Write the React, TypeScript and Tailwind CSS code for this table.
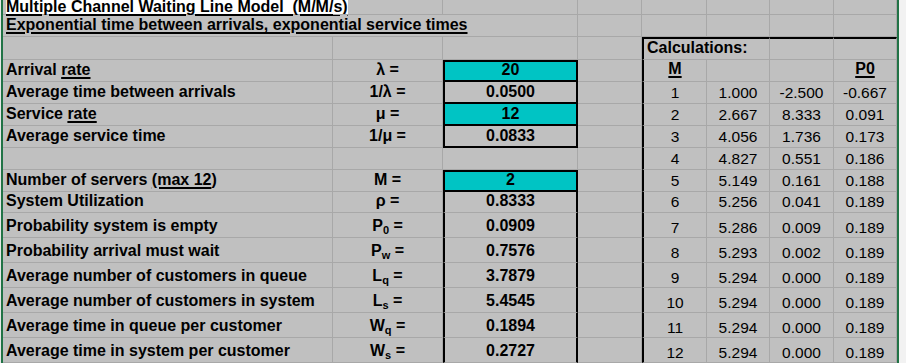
import type { ReactNode } from 'react';

const GRID = 'border-r border-b border-r-[#a8a8a8] border-b-[#a8a8a8]';
const CYAN = 'bg-[#00c4c4]';
const U = 'underline decoration-2 underline-offset-2';

function Cell({
  w,
  className = '',
  left = false,
  pb = 'pb-[2px]',
  lh = 'leading-[18px]',
  children,
}: {
  w: string;
  className?: string;
  left?: boolean;
  pb?: string;
  lh?: string;
  children?: ReactNode;
}) {
  return (
    <div
      className={`${w} shrink-0 flex items-end whitespace-nowrap ${lh} ${pb} ${
        left ? 'justify-start pl-[3px]' : 'justify-center'
      } ${className}`}
    >
      {children !== undefined && <span>{children}</span>}
    </div>
  );
}

type Row = {
  h: string;
  tall: boolean;
  label?: ReactNode;
  sym?: ReactNode;
  val?: string;
  box: string;
  boxPb: string;
  calc: string[];
};

const SIDE = 'border-x-2 border-x-black border-b border-b-[#a8a8a8]';
const BOX = 'border-x-2 border-b-2 border-x-black border-b-black';

const rows: Row[] = [
  {
    h: 'h-[22px]',
    tall: false,
    label: 'Average time between arrivals',
    sym: '1/λ =',
    val: '0.0500',
    box: BOX,
    boxPb: 'pb-[1px]',
    calc: ['1', '1.000', '-2.500', '-0.667'],
  },
  {
    h: 'h-[22px]',
    tall: false,
    label: (
      <>
        Service <span className={U}>rate</span>
      </>
    ),
    sym: 'μ =',
    val: '12',
    box: `${BOX} ${CYAN}`,
    boxPb: 'pb-[1px]',
    calc: ['2', '2.667', '8.333', '0.091'],
  },
  {
    h: 'h-[22px]',
    tall: false,
    label: 'Average service time',
    sym: '1/μ =',
    val: '0.0833',
    box: BOX,
    boxPb: 'pb-[1px]',
    calc: ['3', '4.056', '1.736', '0.173'],
  },
  { h: 'h-[22px]', tall: false, box: GRID, boxPb: 'pb-[2px]', calc: ['4', '4.827', '0.551', '0.186'] },
  {
    h: 'h-[22px]',
    tall: false,
    label: (
      <>
        Number of servers <span className={U}>(max 12</span>)
      </>
    ),
    sym: 'M =',
    val: '2',
    box: `border-2 border-black ${CYAN}`,
    boxPb: 'pb-[1px]',
    calc: ['5', '5.149', '0.161', '0.188'],
  },
  {
    h: 'h-[21px]',
    tall: false,
    label: 'System Utilization',
    sym: 'ρ =',
    val: '0.8333',
    box: SIDE,
    boxPb: 'pb-[2px]',
    calc: ['6', '5.256', '0.041', '0.189'],
  },
  {
    h: 'h-[25px]',
    tall: true,
    label: 'Probability system is empty',
    sym: (
      <>
        P<sub className="text-[11px]">0</sub> =
      </>
    ),
    val: '0.0909',
    box: SIDE,
    boxPb: 'pb-[2px]',
    calc: ['7', '5.286', '0.009', '0.189'],
  },
  {
    h: 'h-[25px]',
    tall: true,
    label: 'Probability arrival must wait',
    sym: (
      <>
        P<sub className="text-[11px]">w</sub> =
      </>
    ),
    val: '0.7576',
    box: SIDE,
    boxPb: 'pb-[2px]',
    calc: ['8', '5.293', '0.002', '0.189'],
  },
  {
    h: 'h-[25px]',
    tall: true,
    label: 'Average number of customers in queue',
    sym: (
      <>
        L<sub className="text-[11px]">q</sub> =
      </>
    ),
    val: '3.7879',
    box: SIDE,
    boxPb: 'pb-[2px]',
    calc: ['9', '5.294', '0.000', '0.189'],
  },
  {
    h: 'h-[25px]',
    tall: true,
    label: 'Average number of customers in system',
    sym: (
      <>
        L<sub className="text-[11px]">s</sub> =
      </>
    ),
    val: '5.4545',
    box: SIDE,
    boxPb: 'pb-[2px]',
    calc: ['10', '5.294', '0.000', '0.189'],
  },
  {
    h: 'h-[25px]',
    tall: true,
    label: 'Average time in queue per customer',
    sym: (
      <>
        W<sub className="text-[11px]">q</sub> =
      </>
    ),
    val: '0.1894',
    box: SIDE,
    boxPb: 'pb-[2px]',
    calc: ['11', '5.294', '0.000', '0.189'],
  },
  {
    h: 'h-[25px]',
    tall: true,
    label: 'Average time in system per customer',
    sym: (
      <>
        W<sub className="text-[11px]">s</sub> =
      </>
    ),
    val: '0.2727',
    box: SIDE,
    boxPb: 'pb-[2px]',
    calc: ['12', '5.294', '0.000', '0.189'],
  },
];

const CALC_L = 'border-l-2 border-l-black border-r border-b border-r-[#a8a8a8] border-b-[#a8a8a8]';
const NUM = 'font-normal text-[15.5px]';

export default function App() {
  return (
    <div className="w-[906px] h-[363px] overflow-hidden flex bg-[#c0c0c0] text-black font-['Liberation_Sans',Arial,sans-serif] text-[16px] font-bold">
      <div className="w-[1px] bg-[#e6e6e6]" />
      <div className="w-[2px] bg-[#217346]" />

      <div className="flex flex-col">
        {/* title rows */}
        <div className="flex h-[15px]">
          <Cell w="w-[330px]" left pb="pb-0" lh="leading-[14px]" className="border-b border-b-[#a8a8a8]">
            <span className={`inline-block h-[14px] bg-white ${U}`}>
              Multiple Channel Waiting Line Model&nbsp; (M/M/s)
            </span>
          </Cell>
          <Cell w="w-[110px]" className={GRID} />
          <Cell w="w-[135px]" className={GRID} />
          <Cell w="w-[64px]" className={GRID} />
          <Cell w="w-[65px]" className={GRID} />
          <Cell w="w-[63px]" className={GRID} />
          <Cell w="w-[64px]" className={GRID} />
          <Cell w="w-[63px]" className={GRID} />
        </div>
        <div className="flex h-[22px]">
          <Cell w="w-[330px]" left className="border-b border-b-[#a8a8a8]">
            <span className={U}>Exponential time between arrivals, exponential service times</span>
          </Cell>
          <Cell w="w-[110px]" className="border-b border-b-[#a8a8a8]" />
          <Cell w="w-[135px]" className={GRID} />
          <Cell w="w-[64px]" className={GRID} />
          <Cell w="w-[65px]" className={GRID} />
          <Cell w="w-[63px]" className={GRID} />
          <Cell w="w-[64px]" className={GRID} />
          <Cell w="w-[63px]" className={GRID} />
        </div>
        <div className="flex h-[23px]">
          <Cell w="w-[330px]" className={GRID} />
          <Cell w="w-[110px]" className={GRID} />
          <Cell w="w-[135px]" className={GRID} />
          <Cell w="w-[64px]" className={GRID} />
          <Cell
            w="w-[65px]"
            left
            className="border-t-2 border-t-black border-l-2 border-l-black border-b border-b-[#a8a8a8]"
          >
            Calculations:
          </Cell>
          <Cell w="w-[63px]" className={`${GRID} border-t-2 border-t-black`} />
          <Cell w="w-[64px]" className={`${GRID} border-t-2 border-t-black`} />
          <Cell w="w-[63px]" className={`${GRID} border-t-2 border-t-black`} />
        </div>
        <div className="flex h-[22px]">
          <Cell w="w-[330px]" left className={GRID}>
            Arrival <span className={U}>rate</span>
          </Cell>
          <Cell w="w-[110px]" className={GRID}>
            λ =
          </Cell>
          <Cell w="w-[135px]" pb="pb-[1px]" className={`border-2 border-black ${CYAN}`}>
            20
          </Cell>
          <Cell w="w-[64px]" className={GRID} />
          <Cell w="w-[65px]" pb="pb-[3px]" className={CALC_L}>
            <span className={U}>M</span>
          </Cell>
          <Cell w="w-[63px]" className={GRID} />
          <Cell w="w-[64px]" className={GRID} />
          <Cell w="w-[63px]" pb="pb-[3px]" className={GRID}>
            <span className={U}>P0</span>
          </Cell>
        </div>

        {rows.map((r, i) => {
          const npb = r.tall ? 'pb-0' : 'pb-[1px]';
          return (
            <div key={i} className={`flex ${r.h}`}>
              <Cell w="w-[330px]" left className={GRID}>
                {r.label}
              </Cell>
              <Cell w="w-[110px]" className={GRID}>
                {r.sym}
              </Cell>
              <Cell w="w-[135px]" pb={r.boxPb} className={r.box}>
                {r.val}
              </Cell>
              <Cell w="w-[64px]" className={GRID} />
              <Cell w="w-[65px]" pb={npb} className={`${CALC_L} ${NUM}`}>
                {r.calc[0]}
              </Cell>
              <Cell w="w-[63px]" pb={npb} className={`${GRID} ${NUM}`}>
                {r.calc[1]}
              </Cell>
              <Cell w="w-[64px]" pb={npb} className={`${GRID} ${NUM}`}>
                {r.calc[2]}
              </Cell>
              <Cell w="w-[63px]" pb={npb} className={`${GRID} ${NUM}`}>
                {r.calc[3]}
              </Cell>
            </div>
          );
        })}
      </div>

      <div className="w-[2px] bg-[#217346]" />
      <div className="flex-1 bg-[#f2f2f2]" />
    </div>
  );
}
